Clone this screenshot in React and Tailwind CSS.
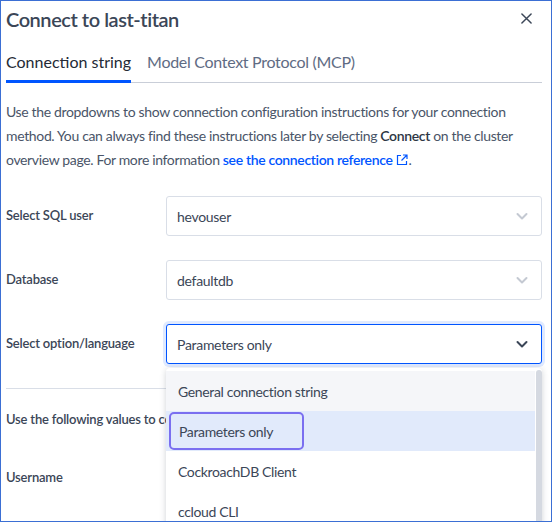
import React from "react";

const font = { fontFamily: '"Source Sans Pro", Lato, "Liberation Sans", sans-serif' };

function Chevron({ className }) {
  return (
    <svg width="14" height="14" viewBox="0 0 14 14" className={className} fill="none">
      <path d="M2.5 5 L7 9.5 L11.5 5" stroke="currentColor" strokeWidth="2" strokeLinecap="round" strokeLinejoin="round" />
    </svg>
  );
}

function Row({ label, value, active }) {
  return (
    <div className="flex items-center h-10">
      <div className="w-[160px] text-[13px] tracking-[-0.2px] font-semibold text-[#3b4657]">{label}</div>
      <div
        className={
          "flex-1 h-10 rounded-[3px] flex items-center justify-between pl-[10px] pr-[12px] bg-white " +
          (active
            ? "border border-[#0055ff] shadow-[0_0_0_3px_rgba(0,85,255,0.12)]"
            : "border border-[#d9dee7]")
        }
      >
        <span className="text-[14px] tracking-[-0.3px] text-[#3b4657]">{value}</span>
        <Chevron className={active ? "text-[#3b4657]" : "text-[#c4c9d2]"} />
      </div>
    </div>
  );
}

export default function App() {
  return (
    <div style={font} className="relative w-[552px] h-[522px] overflow-hidden bg-white border border-[#3b6fd4]">
      <div className="pl-[5px] pr-[9px]">
        {/* Header */}
        <div className="flex items-center justify-between h-[35px]">
          <h1 className="text-[20px] tracking-[-0.45px] font-semibold text-[#3b4657] leading-none">Connect to last-titan</h1>
          <svg width="11" height="11" viewBox="0 0 12 12" className="mr-[10px]">
            <path d="M1 1 L11 11 M11 1 L1 11" stroke="#3b4657" strokeWidth="1.6" strokeLinecap="round" />
          </svg>
        </div>

        {/* Tabs */}
        <div className="mt-[10px] flex items-end gap-[16px] border-b border-[#c9ced8] h-[37px]">
          <div className="relative h-full flex items-center pb-[4px]">
            <span className="text-[16px] text-[#242a35]">Connection string</span>
            <div className="absolute left-0 right-0 -bottom-[1px] h-[3px] bg-[#0055ff]" />
          </div>
          <div className="h-full flex items-center pb-[4px]">
            <span className="text-[16px] tracking-[-0.3px] text-[#5f6c84]">Model Context Protocol (MCP)</span>
          </div>
        </div>

        {/* Paragraph */}
        <p className="mt-[17px] text-[14px] tracking-[-0.35px] leading-[24px] text-[#4a5568]">
          Use the dropdowns to show connection configuration instructions for your connection method. You can always find these instructions later by selecting{" "}
          <span className="font-semibold text-[#2d3644]">Connect</span> on the cluster overview page. For more information{" "}
          <span className="font-semibold text-[#0055ff]">
            see the connection reference
            <svg width="12" height="12" viewBox="0 0 12 12" className="inline-block ml-[4px] -mt-[3px]" fill="none">
              <path d="M5 1.5 H1.5 V10.5 H10.5 V7" stroke="#0055ff" strokeWidth="1.2" />
              <path d="M7 1 H11 V5 M11 1 L5.5 6.5" stroke="#0055ff" strokeWidth="1.2" />
            </svg>
          </span>
          .
        </p>

        {/* Rows */}
        <div className="mt-[24px] flex flex-col gap-[24px]">
          <Row label="Select SQL user" value="hevouser" />
          <Row label="Database" value="defaultdb" />
          <Row label="Select option/language" value="Parameters only" active />
        </div>

        <div className="mt-[24px] h-px bg-[#d9dee7]" />

        <div className="mt-[21px] text-[13px] tracking-[-0.2px] font-semibold text-[#3b4657]">
          Use the following values to connect to your cluster
        </div>
        <div className="mt-[38px] text-[13px] tracking-[-0.2px] font-semibold text-[#3b4657]">Username</div>
      </div>

      {/* Dropdown menu */}
      <div className="absolute left-[165px] top-[367px] w-[376px] h-[200px] bg-white rounded-[4px] shadow-[0_1px_6px_rgba(40,50,70,0.22)] overflow-hidden">
        <div className="pt-[3px] pr-[7px] text-[14px] tracking-[-0.35px] text-[#3b4657]">
          <div className="h-10 flex items-center pl-[12px] bg-[#f5f6f9]">General connection string</div>
          <div className="h-10 flex items-center pl-[3px] bg-[#e1eafb]">
            <div className="h-[38px] w-[135px] flex items-center pl-[8px] rounded-[5px] border-2 border-[#7a6ff0]">
              Parameters only
            </div>
          </div>
          <div className="h-10 flex items-center pl-[12px]">CockroachDB Client</div>
          <div className="h-10 flex items-center pl-[12px]">ccloud CLI</div>
        </div>
        <div className="absolute right-0 top-[2px] w-[6px] h-[200px] rounded-[3px] bg-[#d5d9e1]" />
      </div>
    </div>
  );
}
